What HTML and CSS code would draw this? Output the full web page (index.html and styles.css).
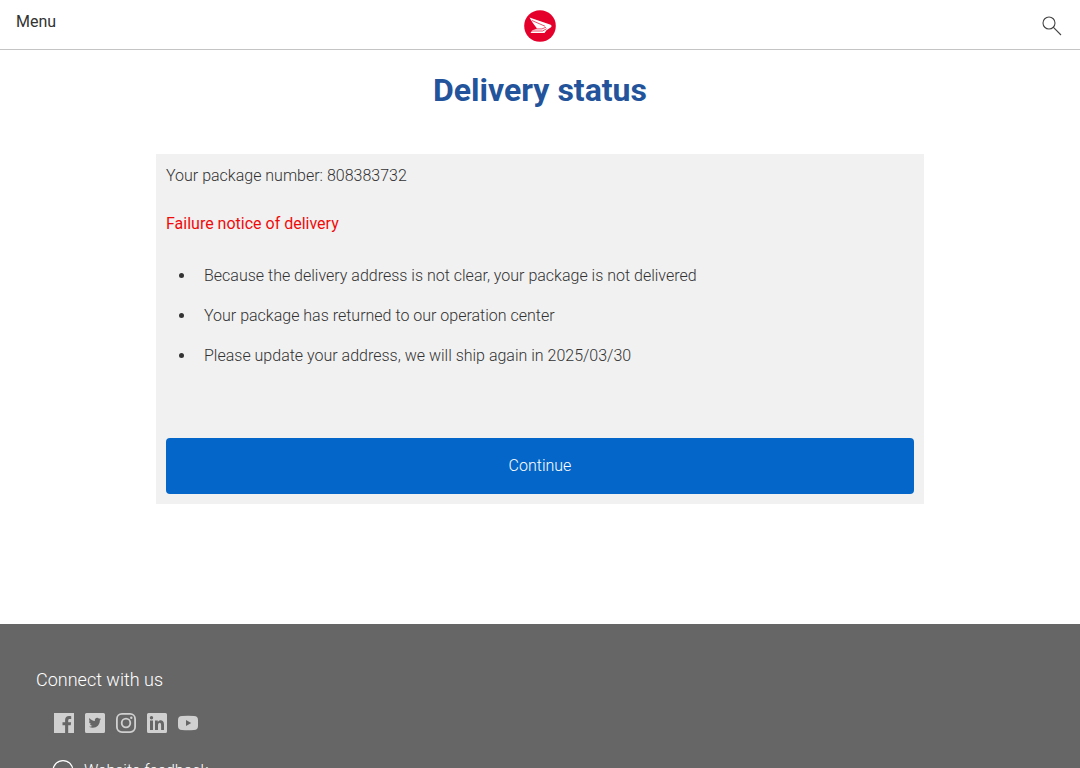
FILE: index.html
```
<!DOCTYPE html>
<html lang="en">
<head>
<meta charset="utf-8">
<meta name="viewport" content="width=device-width, initial-scale=1">
<title>Delivery status</title>
<link rel="stylesheet" href="styles.css">
</head>
<body>
<header class="site-header">
  <button class="menu-button" type="button">Menu</button>
  <a class="logo" href="#" aria-label="Home">
    <svg viewBox="0 0 32 32" width="32" height="32" aria-hidden="true">
      <circle cx="16" cy="16" r="15.800" fill="#e4002b"/>
      <path fill="#fff" d="M5.500 7.500 26 14.500Q28.500 15.500 27 17.200L22.500 20.200L20.500 23H6.500L8 20.500L13 18.500L8.500 12.500Z"/>
      <path fill="none" stroke="#e4002b" stroke-width="0.700" d="M7 21H18.500L22.500 18.800M10 18.900H18L22 17.200M8 10.500 21 16.200"/>
    </svg>
  </a>
  <button class="search-button" type="button" aria-label="Search">
    <svg viewBox="0 0 20 20" width="20" height="20" fill="none" stroke="#444" stroke-width="1.100" aria-hidden="true">
      <circle cx="7" cy="7" r="6"/>
      <path d="M11.200 11.200 19 19"/>
    </svg>
  </button>
</header>

<main class="content">
  <h1 class="title">Delivery status</h1>
  <section class="card">
    <p class="package">Your package number: 808383732</p>
    <p class="notice">Failure notice of delivery</p>
    <ul class="details">
      <li>Because the delivery address is not clear, your package is not delivered</li>
      <li>Your package has returned to our operation center</li>
      <li>Please update your address, we will ship again in 2025/03/30</li>
    </ul>
    <button class="continue" type="button">Continue</button>
  </section>
</main>

<footer class="site-footer">
  <h2 class="footer-title">Connect with us</h2>
  <nav class="social" aria-label="Social media">
    <a href="#" aria-label="Facebook"><svg viewBox="0 0 20 20" width="20" height="20" aria-hidden="true"><path d="M0 0H20V20H14.200V12.200H16.700L17.100 9.200H14.200V7.400C14.200 6.400 14.600 5.900 15.700 5.900H17.200V3.200C16.800 3.100 15.900 3 15 3C12.600 3 11.100 4.400 11.100 7V9.200H8.500V12.200H11.100V20H0Z"/></svg></a>
    <a href="#" aria-label="Twitter"><svg viewBox="0 0 20 20" width="20" height="20" aria-hidden="true"><path fill-rule="evenodd" d="M1.500 0H18.500Q20 0 20 1.500V18.500Q20 20 18.500 20H1.500Q0 20 0 18.500V1.500Q0 0 1.500 0ZM4.400 5C4 5.900 3.900 7.500 5.200 8.500L4 8.200C4 9.500 4.900 10.500 6.200 10.900H5C5.400 12 6.200 12.600 7.500 12.700C6.500 13.500 5.200 13.800 3.800 13.700C9.500 16.800 15 13 14.800 7.600L16.200 6.100L14.700 6.500L15.800 5.100L14.100 5.700C12.100 3.700 9.200 5.500 9.900 7.900C7.600 7.800 5.800 6.800 4.400 5Z"/></svg></a>
    <a href="#" aria-label="Instagram"><svg viewBox="0 0 20 20" width="20" height="20" aria-hidden="true"><g fill="none" stroke="currentColor" stroke-width="1.800"><rect x="0.900" y="0.900" width="18.200" height="18.200" rx="5"/><circle cx="10" cy="10" r="4.300"/></g><circle cx="15.300" cy="4.700" r="1.200"/></svg></a>
    <a href="#" aria-label="LinkedIn"><svg viewBox="0 0 20 20" width="20" height="20" aria-hidden="true"><path fill-rule="evenodd" d="M1.500 0H18.500Q20 0 20 1.500V18.500Q20 20 18.500 20H1.500Q0 20 0 18.500V1.500Q0 0 1.500 0ZM3 7.500V17H6V7.500ZM8 7.500V17H11V12.300C11 9 14.100 8.900 14.100 12.100V17H17V11.400C17 6.800 12.600 6.300 10.800 8.900V7.500ZM4.500 3A1.700 1.700 0 1 0 4.500 6.400A1.700 1.700 0 1 0 4.500 3Z"/></svg></a>
    <a href="#" aria-label="YouTube"><svg viewBox="0 0 20 20" width="20" height="20" aria-hidden="true"><path fill-rule="evenodd" d="M4 3Q10 2.500 16 3Q20 3 20 7V13Q20 17 16 17Q10 17.500 4 17Q0 17 0 13V7Q0 3 4 3ZM8 7V13L13.200 10Z"/></svg></a>
  </nav>
  <a class="feedback" href="#">
    <svg viewBox="0 0 22 22" width="22" height="22" fill="none" stroke="currentColor" stroke-width="1.200" aria-hidden="true"><circle cx="11" cy="10.600" r="10"/></svg>
    <span>Website feedback</span>
  </a>
</footer>
</body>
</html>
```
FILE: styles.css
```
* {
  box-sizing: border-box;
}

body {
  margin: 0;
  background: #fff;
  color: #333;
  font-family: Roboto, "Liberation Sans", sans-serif;
  font-size: 16px;
  font-weight: 300;
  line-height: 24px;
}

button {
  border: 0;
  background: none;
  color: inherit;
  font: inherit;
  cursor: pointer;
}

a {
  color: inherit;
  text-decoration: none;
}

svg {
  display: block;
}

.site-header {
  display: grid;
  grid-template-columns: 1fr auto 1fr;
  align-items: start;
  padding: 10px 16px 7px;
  border-bottom: 1px solid #c4c4c4;
}

.menu-button {
  justify-self: start;
  padding: 0;
  font-weight: 400;
}

.search-button {
  justify-self: end;
  padding: 6px 2px;
}

.content {
  width: 100%;
  max-width: 768px;
  margin: 0 auto;
  padding: 20px 0 120px;
}

.title {
  margin: 0 0 44px;
  color: #23549b;
  font-size: 32px;
  font-weight: 700;
  line-height: 40px;
  text-align: center;
}

.card {
  padding: 10px;
  background: #f1f1f1;
}

.package {
  margin: 0 0 24px;
}

.notice {
  margin: 0 0 20px;
  color: #f00b0b;
  font-weight: 400;
}

.details {
  margin: 0 0 62px;
  padding-left: 30px;
}

.details li {
  padding: 8px 0 8px 8px;
}

.continue {
  display: block;
  width: 100%;
  padding: 16px;
  border-radius: 4px;
  background: #0366c8;
  color: #fff;
}

.site-footer {
  padding: 44px 36px;
  background: #666;
  color: #fff;
}

.footer-title {
  margin: 0 0 21px;
  font-size: 18px;
  font-weight: 300;
}

.social {
  display: flex;
  gap: 11px;
  margin: 0 0 26px;
  padding-left: 18px;
  color: #d0d0d0;
  fill: currentColor;
}

.feedback {
  display: flex;
  gap: 10px;
  align-items: center;
  padding-left: 16px;
}
```
